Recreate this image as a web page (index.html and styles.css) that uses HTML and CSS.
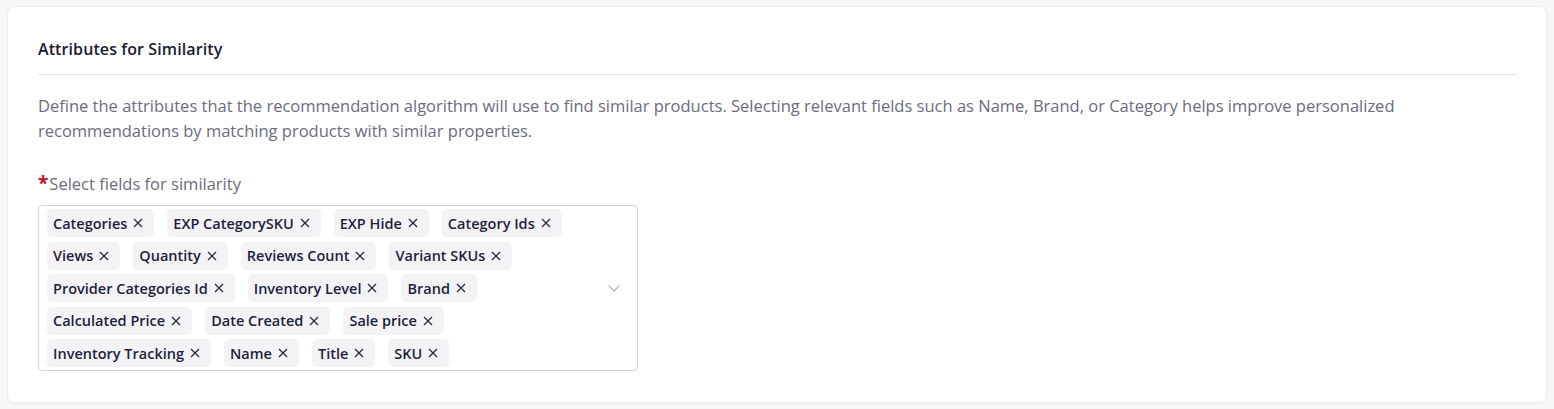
FILE: index.html
```html
<!DOCTYPE html>
<html>
<head>
<meta charset="utf-8">
<link rel="stylesheet" href="styles.css">
</head>
<body>
<div class="card">
  <h2 class="title">Attributes for Similarity</h2>
  <div class="divider"></div>
  <p class="desc">Define the attributes that the recommendation algorithm will use to find similar products. Selecting relevant fields such as Name, Brand, or Category helps improve personalized recommendations by matching products with similar properties.</p>
  <label class="label"><span class="req">*</span>Select fields for similarity</label>
  <div class="select">
    <div class="tags">
      <span class="tag">Categories<svg class="x" viewBox="0 0 10 10"><path d="M1 1L9 9M9 1L1 9"/></svg></span>
      <span class="tag">EXP CategorySKU<svg class="x" viewBox="0 0 10 10"><path d="M1 1L9 9M9 1L1 9"/></svg></span>
      <span class="tag">EXP Hide<svg class="x" viewBox="0 0 10 10"><path d="M1 1L9 9M9 1L1 9"/></svg></span>
      <span class="tag">Category Ids<svg class="x" viewBox="0 0 10 10"><path d="M1 1L9 9M9 1L1 9"/></svg></span>
      <span class="tag">Views<svg class="x" viewBox="0 0 10 10"><path d="M1 1L9 9M9 1L1 9"/></svg></span>
      <span class="tag">Quantity<svg class="x" viewBox="0 0 10 10"><path d="M1 1L9 9M9 1L1 9"/></svg></span>
      <span class="tag">Reviews Count<svg class="x" viewBox="0 0 10 10"><path d="M1 1L9 9M9 1L1 9"/></svg></span>
      <span class="tag">Variant SKUs<svg class="x" viewBox="0 0 10 10"><path d="M1 1L9 9M9 1L1 9"/></svg></span>
      <span class="tag">Provider Categories Id<svg class="x" viewBox="0 0 10 10"><path d="M1 1L9 9M9 1L1 9"/></svg></span>
      <span class="tag">Inventory Level<svg class="x" viewBox="0 0 10 10"><path d="M1 1L9 9M9 1L1 9"/></svg></span>
      <span class="tag">Brand<svg class="x" viewBox="0 0 10 10"><path d="M1 1L9 9M9 1L1 9"/></svg></span>
      <span class="tag">Calculated Price<svg class="x" viewBox="0 0 10 10"><path d="M1 1L9 9M9 1L1 9"/></svg></span>
      <span class="tag">Date Created<svg class="x" viewBox="0 0 10 10"><path d="M1 1L9 9M9 1L1 9"/></svg></span>
      <span class="tag">Sale price<svg class="x" viewBox="0 0 10 10"><path d="M1 1L9 9M9 1L1 9"/></svg></span>
      <span class="tag">Inventory Tracking<svg class="x" viewBox="0 0 10 10"><path d="M1 1L9 9M9 1L1 9"/></svg></span>
      <span class="tag">Name<svg class="x" viewBox="0 0 10 10"><path d="M1 1L9 9M9 1L1 9"/></svg></span>
      <span class="tag">Title<svg class="x" viewBox="0 0 10 10"><path d="M1 1L9 9M9 1L1 9"/></svg></span>
      <span class="tag">SKU<svg class="x" viewBox="0 0 10 10"><path d="M1 1L9 9M9 1L1 9"/></svg></span>
    </div>
    <svg class="chev" viewBox="0 0 12 7"><path d="M0.7 0.7L6 6L11.3 0.7"/></svg>
  </div>
</div>
</body>
</html>
```

FILE: styles.css
```css
html, body {
  margin: 0;
  padding: 0;
  background: #f7f7f7;
}
body {
  padding: 7px 8px 7px 8px;
  font-family: "Open Sans", "Noto Sans", sans-serif;
}
.card {
  background: #fff;
  border-radius: 6px;
  box-shadow: 0 0 0 1px #ececec, 0 1px 3px rgba(0,0,0,0.06);
  padding: 30px 30px 30px 30px;
  height: 395px;
  box-sizing: border-box;
}
.title {
  margin: 0;
  font-size: 16px;
  font-weight: 600;
  letter-spacing: 0.1px;
  color: #1b1b2f;
  line-height: 24px;
}
.divider {
  height: 1px;
  background: #e6e6e9;
  margin-top: 13px;
}
.desc {
  margin: 18px 0 0 0;
  font-size: 16.5px;
  line-height: 25px;
  color: #6c6c7c;
}
.label {
  display: flex;
  align-items: baseline;
  margin-top: 29px;
  font-size: 16.5px;
  line-height: 22px;
  color: #6c6c7c;
}
.req {
  color: #c8102e;
  font-weight: 700;
  font-size: 19px;
  margin-right: 1px;
}
.select {
  margin-top: 10px;
  width: 600px;
  box-sizing: border-box;
  border: 1px solid #d4d4dc;
  border-radius: 4px;
  padding: 3px 40px 3px 8px;
  display: flex;
  align-items: center;
  position: relative;
}
.tags {
  display: flex;
  flex-wrap: wrap;
  column-gap: 13px;
  row-gap: 4.5px;
}
.tag {
  display: inline-flex;
  align-items: center;
  height: 28px;
  background: #f3f3f6;
  border-radius: 5px;
  padding: 0 11px 0 6px;
  font-size: 14.5px;
  font-weight: 600;
  color: #1f1f3a;
}
.x {
  width: 10px;
  height: 10px;
  margin-left: 6px;
  fill: none;
  stroke: #2a2a3e;
  stroke-width: 1.3;
}
.chev {
  position: absolute;
  right: 17px;
  top: 50%;
  width: 12px;
  height: 7px;
  margin-top: -3px;
  fill: none;
  stroke: #a6a6b4;
  stroke-width: 1.1;
}
```
